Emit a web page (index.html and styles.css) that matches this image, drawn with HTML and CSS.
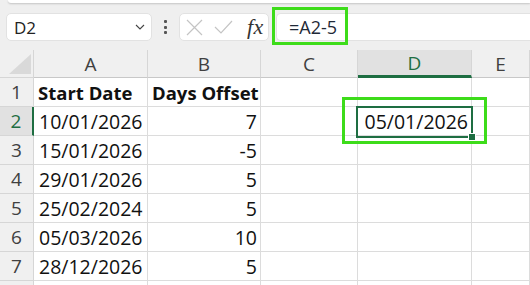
FILE: index.html
```html
<!DOCTYPE html>
<html>
<head>
<meta charset="utf-8">
<link rel="stylesheet" href="styles.css">
</head>
<body>
<div class="app">
  <div class="ribbon-edge"></div>
  <div class="toolbar">
    <div class="namebox">
      <span class="name">D2</span>
      <svg class="chev" width="10" height="6" viewBox="0 0 10 6"><path d="M1 1 L5 5 L9 1" fill="none" stroke="#444" stroke-width="1.1"/></svg>
    </div>
    <div class="dots"><i></i><i></i><i></i></div>
    <div class="iconbox">
      <svg width="17" height="17" viewBox="0 0 17 17"><path d="M1 1 L16 16 M16 1 L1 16" stroke="#c4c4c4" stroke-width="1.2" fill="none"/></svg>
      <svg width="19" height="14" viewBox="0 0 19 14"><path d="M1 7 L7 13 L18 1" stroke="#c4c4c4" stroke-width="1.2" fill="none"/></svg>
      <span class="fx">fx</span>
    </div>
    <div class="formula-wrap">
      <div class="formula"><span class="ftext">=A2-5</span></div>
      <div class="hl-formula"></div>
    </div>
  </div>
  <div class="sheet">
    <div class="corner"><svg width="22" height="20" viewBox="0 0 22 20"><path d="M22 0 L22 20 L0 20 Z" fill="#d9d9d9"/></svg></div>
    <div class="ch">A</div>
    <div class="ch">B</div>
    <div class="ch">C</div>
    <div class="ch sel">D</div>
    <div class="ch">E</div>

    <div class="rh">1</div>
    <div class="c b">Start Date</div>
    <div class="c b">Days Offset</div>
    <div class="c"></div><div class="c"></div><div class="c"></div>

    <div class="rh sel">2</div>
    <div class="c">10/01/2026</div>
    <div class="c r">7</div>
    <div class="c"></div><div class="c r">05/01/2026</div><div class="c"></div>

    <div class="rh">3</div>
    <div class="c">15/01/2026</div>
    <div class="c r">-5</div>
    <div class="c"></div><div class="c"></div><div class="c"></div>

    <div class="rh">4</div>
    <div class="c">29/01/2026</div>
    <div class="c r">5</div>
    <div class="c"></div><div class="c"></div><div class="c"></div>

    <div class="rh">5</div>
    <div class="c">25/02/2024</div>
    <div class="c r">5</div>
    <div class="c"></div><div class="c"></div><div class="c"></div>

    <div class="rh">6</div>
    <div class="c">05/03/2026</div>
    <div class="c r">10</div>
    <div class="c"></div><div class="c"></div><div class="c"></div>

    <div class="rh">7</div>
    <div class="c">28/12/2026</div>
    <div class="c r">5</div>
    <div class="c"></div><div class="c"></div><div class="c"></div>

    <div class="rh"></div>
    <div class="c"></div><div class="c"></div><div class="c"></div><div class="c"></div><div class="c"></div>

    <div class="cellsel"><span class="handle"></span></div>
    <div class="hl-cell"></div>
  </div>
</div>
</body>
</html>
```
FILE: styles.css
```css
html, body {
  margin: 0;
  padding: 0;
}
body {
  width: 530px;
  height: 285px;
  overflow: hidden;
  background: #efefef;
  font-family: "Open Sans", "Noto Sans", sans-serif;
}
.app {
  display: flex;
  flex-direction: column;
  width: 530px;
  height: 285px;
  overflow: hidden;
}
.ribbon-edge {
  height: 3px;
  flex: none;
  margin-left: 8px;
  background: #ffffff;
  border-bottom-left-radius: 6px;
  box-shadow: 0 1px 2px rgba(0,0,0,0.18);
}
.toolbar {
  display: flex;
  flex: none;
  align-items: center;
  height: 28px;
  margin-top: 10px;
  padding-left: 6px;
}
.namebox {
  box-sizing: border-box;
  width: 146px;
  height: 28px;
  background: #fff;
  border: 1px solid #e2e2e2;
  border-radius: 5px;
  display: flex;
  align-items: center;
  justify-content: space-between;
  padding: 0 6px 0 7px;
}
.name {
  font-size: 17px;
  color: #222;
}
.chev {
  display: block;
}
.dots {
  width: 27px;
  display: flex;
  flex-direction: column;
  align-items: center;
  gap: 2.5px;
}
.dots i {
  display: block;
  width: 3px;
  height: 3px;
  border-radius: 1px;
  background: #555;
}
.iconbox {
  box-sizing: border-box;
  width: 90px;
  height: 28px;
  background: #fff;
  border: 1px solid #e2e2e2;
  border-radius: 5px;
  display: flex;
  align-items: center;
  padding-left: 6px;
  gap: 11px;
}
.iconbox svg {
  display: block;
}
.fx {
  font-family: "Liberation Serif", "DejaVu Serif", serif;
  font-style: italic;
  font-size: 22px;
  color: #333;
  margin-left: 3px;
  letter-spacing: 0.5px;
  line-height: 1;
}
.formula-wrap {
  position: relative;
  flex: 1;
  margin-left: 7px;
  height: 28px;
}
.formula {
  box-sizing: border-box;
  height: 28px;
  background: #fff;
  border: 1px solid #e2e2e2;
  border-right: none;
  border-radius: 5px 0 0 5px;
  display: flex;
  align-items: center;
  padding-left: 12px;
}
.ftext {
  font-size: 18px;
  color: #1f2937;
}
.hl-formula {
  position: absolute;
  left: -4px;
  top: -6px;
  width: 76px;
  height: 38px;
  box-sizing: border-box;
  border: 3px solid #3ddc1a;
}
.sheet {
  position: relative;
  flex: none;
  margin-top: 9px;
  display: grid;
  grid-template-columns: 34px 114px 113px 97px 114px 58px;
  grid-template-rows: 28px repeat(8, 29px);
  background: #fff;
}
.corner {
  background: #f0f0f0;
  border-right: 1px solid #d6d6d6;
  border-bottom: 1px solid #d6d6d6;
  display: flex;
  align-items: flex-end;
  justify-content: flex-end;
  padding: 0 2px 3px 0;
}
.corner svg { display: block; }
.ch {
  background: #f0f0f0;
  border-right: 1px solid #d6d6d6;
  border-bottom: 1px solid #c8c8c8;
  display: flex;
  align-items: center;
  justify-content: center;
  font-size: 19px;
  color: #404040;
}
.ch.sel {
  background: #e1e1e1;
  color: #1e6e42;
  border-bottom: 3px solid #1e6e42;
}
.rh {
  background: #f0f0f0;
  border-right: 1px solid #d6d6d6;
  border-bottom: 1px solid #d6d6d6;
  display: flex;
  align-items: center;
  justify-content: center;
  font-size: 19px;
  color: #404040;
}
.rh.sel {
  background: #e1e1e1;
  color: #1e6e42;
  border-right: 2px solid #1e6e42;
}
.c {
  border-right: 1px solid #dcdcdc;
  border-bottom: 1px solid #dcdcdc;
  display: flex;
  align-items: center;
  padding: 0 4px 0 5px;
  font-size: 19.5px;
  color: #111;
  white-space: nowrap;
  overflow: hidden;
}
.c.b {
  font-weight: 700;
  font-size: 18.5px;
  padding-left: 4px;
}
.c.r {
  justify-content: flex-end;
  padding-right: 3px;
}
.cellsel {
  position: absolute;
  left: 356px;
  top: 56px;
  width: 117px;
  height: 32px;
  box-sizing: border-box;
  border: 2px solid #1e6e42;
}
.handle {
  position: absolute;
  right: -4px;
  bottom: -4px;
  width: 6px;
  height: 6px;
  background: #1e6e42;
  border: 1px solid #fff;
  box-sizing: content-box;
  margin: -1px;
}
.hl-cell {
  position: absolute;
  left: 342px;
  top: 47px;
  width: 145px;
  height: 47px;
  box-sizing: border-box;
  border: 3px solid #3ddc1a;
}
```
